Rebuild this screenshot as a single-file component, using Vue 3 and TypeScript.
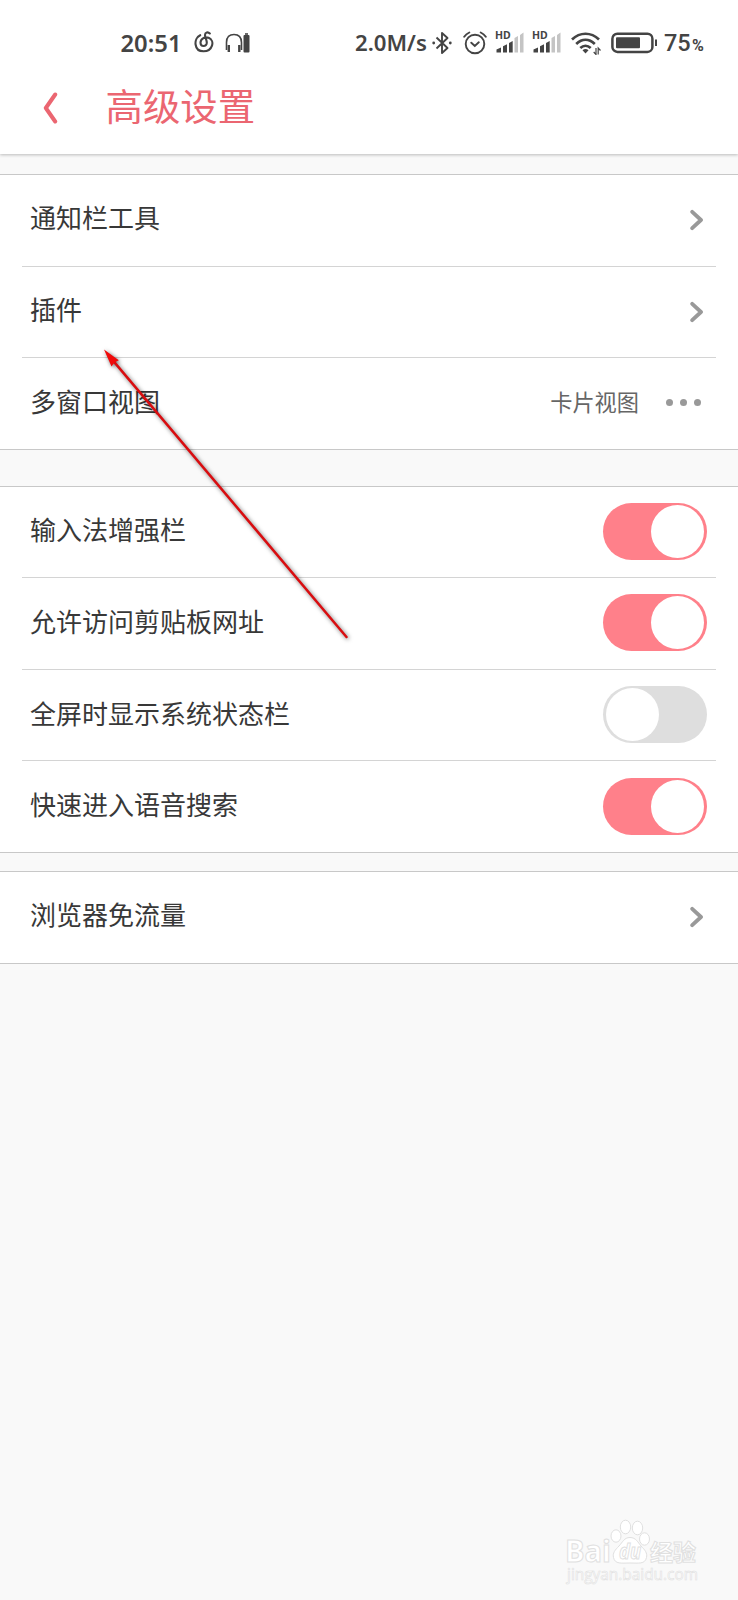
<script setup lang="ts">
type RowKind = 'link' | 'value' | 'toggle'

interface Row {
  label: string
  kind: RowKind
  value?: string
  on?: boolean
}

interface Group {
  id: string
  rows: Row[]
}

const groups: Group[] = [
  {
    id: 'tools',
    rows: [
      { label: '通知栏工具', kind: 'link' },
      { label: '插件', kind: 'link' },
      { label: '多窗口视图', kind: 'value', value: '卡片视图' },
    ],
  },
  {
    id: 'switches',
    rows: [
      { label: '输入法增强栏', kind: 'toggle', on: true },
      { label: '允许访问剪贴板网址', kind: 'toggle', on: true },
      { label: '全屏时显示系统状态栏', kind: 'toggle', on: false },
      { label: '快速进入语音搜索', kind: 'toggle', on: true },
    ],
  },
  {
    id: 'traffic',
    rows: [{ label: '浏览器免流量', kind: 'link' }],
  },
]
</script>

<template>
  <div class="screen">
    <header class="header">
      <div class="status">
        <span class="time">20:51</span>
        <svg class="music" width="20" height="22" viewBox="0 0 20 22" fill="none" stroke="#444" stroke-width="2.100" stroke-linecap="round">
          <path d="M6.200 4.200C-.8 7.500-.2 20.300 9.500 20.300C18.500 20.300 21.500 9.500 14.500 6.800C10.500 5.300 6.500 8 6.500 11.700C6.500 16 12.800 16 12.800 11.700C12.800 9 11 6.500 11 4C11 1 14 .6 15.800 2.500" />
        </svg>
        <svg class="phones" width="26" height="22" viewBox="0 0 26 22" fill="none" stroke="#444" stroke-width="1.600">
          <path d="M1.500 18V10.500C1.500 5 4.500 2.500 9 2.500s7.500 2.500 7.500 8V18" />
          <path d="M3.800 13v7M14.300 13v7" stroke-width="2.400" />
          <rect x="18.500" y="3" width="6" height="17.500" rx="1" fill="#444" stroke="none" />
          <path d="M20 2h3" />
        </svg>
        <span class="speed">2.0M/s</span>
        <svg class="bluetooth" width="20" height="24" viewBox="0 0 20 24" fill="none" stroke="#444" stroke-width="1.900" stroke-linejoin="round">
          <path d="M4.500 6.500L15.500 17L10 22V2l5.500 5L4.500 17.500" />
          <circle cx="1.700" cy="12" r="1.400" fill="#444" stroke="none" />
          <circle cx="18.300" cy="12" r="1.400" fill="#444" stroke="none" />
        </svg>
        <svg class="alarm" width="24" height="24" viewBox="0 0 24 24" fill="none" stroke="#444" stroke-width="1.900" stroke-linecap="round">
          <circle cx="12" cy="13" r="9.300" />
          <path d="M8.300 11.700l3.500 3.200 4-3.600M1.200 5.800C2.500 3.800 4.300 2.400 6.300 1.500M22.800 5.800C21.500 3.800 19.700 2.400 17.700 1.500" />
        </svg>
        <svg v-for="n in 2" :key="n" class="signal" width="29" height="32" viewBox="0 -4 29 32">
          <text x="0" y="7.800" class="hd">HD</text>
          <path d="M1.500 21.500v-3l4.500-2v5z" fill="#444" />
          <path d="M8 21.500v-6.300l4-2v8.300z" fill="#444" />
          <path d="M14 21.500v-9.500l3.700-2v11.500z" fill="#444" />
          <path d="M19.500 21.500V7l3.500-2v16.500zM25 21.500V4l3.500-2.500v20z" fill="#c4c4c4" />
        </svg>
        <svg class="wifi" width="30" height="24" viewBox="0 0 30 24" fill="none" stroke="#444" stroke-width="2.700">
          <path d="M1 8.500C9 .8 20 .8 28 8.500M5.200 13C11 7.500 18 7.500 23.800 13M9.300 17C12.500 14 16.500 14 19.700 17" />
          <path d="M14.500 22.500l-3-3.200q3-2.500 6 0z" fill="#444" stroke="none" />
          <path d="M25 17v6.500l-2.300-2.500M27.200 23.500v-6.500l2.300 2.500" stroke-width="1.200" />
        </svg>
        <svg class="battery" width="47" height="22" viewBox="0 0 47 22">
          <rect x="1.400" y="1.700" width="40" height="18.200" rx="5" fill="none" stroke="#444" stroke-width="2.500" />
          <rect x="5" y="5.300" width="24" height="11" rx="1" fill="#444" />
          <path d="M45 7.500v6.500" stroke="#444" stroke-width="2" />
        </svg>
        <span class="charge">75</span><span class="percent">%</span>
      </div>
      <div class="titlebar">
        <svg class="back" width="16" height="32" viewBox="0 0 16 32" fill="none" stroke="#eb6671" stroke-width="4" stroke-linecap="round" stroke-linejoin="round">
          <path d="M12.200 2.500L2.800 16l9.400 13.500" />
        </svg>
        <h1 class="title">高级设置</h1>
      </div>
    </header>

    <main>
      <section v-for="g in groups" :key="g.id" class="group" :class="g.id">
        <div v-for="row in g.rows" :key="row.label" class="row">
          <span class="label">{{ row.label }}</span>
          <svg v-if="row.kind === 'link'" class="chevron" width="14" height="22" viewBox="0 0 14 22" fill="none" stroke="#999" stroke-width="3.800" stroke-linecap="round">
            <path d="M2.200 2.800L11 11 2.200 19.200" stroke-linejoin="round" />
          </svg>
          <template v-else-if="row.kind === 'value'">
            <span class="value">{{ row.value }}</span>
            <span class="dots"><i /><i /><i /></span>
          </template>
          <span v-else class="toggle" :class="{ on: row.on }"><span class="knob" /></span>
        </div>
      </section>
    </main>

    <svg class="arrow" width="260" height="310" viewBox="0 0 260 310">
      <g class="arrow-shape">
        <path d="M13 10.600L246.500 287" stroke="#d90d10" stroke-width="2.500" stroke-linecap="round" />
        <path d="M4 -.5L18.800 10.300 14.500 12.500 11.500 16.500z" fill="#f00a0a" />
      </g>
    </svg>

    <svg class="watermark" width="150" height="76" viewBox="0 0 150 76">
      <g class="mark">
        <text x="5" y="46" class="bai" textLength="46" lengthAdjust="spacingAndGlyphs">Bai</text>
        <ellipse cx="56" cy="20" rx="5" ry="6.200" />
        <ellipse cx="65.500" cy="11" rx="5.200" ry="6.800" />
        <ellipse cx="77.500" cy="12" rx="5.200" ry="6.800" />
        <ellipse cx="84.500" cy="23" rx="5" ry="6.200" />
        <path d="M70 21.500c6 0 8 5 11 8.500 4 4 6.500 7 5.500 11.500-1.500 7-8 5.500-16.500 5.500s-15 1.500-16.500-5.500c-1-4.500 1.500-7.500 5.500-11.500 3.500-3.500 5-8.500 11-8.500z" />
        <text x="59" y="42.500" class="du" textLength="22" lengthAdjust="spacingAndGlyphs">du</text>
        <text x="90" y="44.500" class="cn" textLength="46">经验</text>
        <text x="7" y="63.500" class="url" textLength="131" lengthAdjust="spacingAndGlyphs">jingyan.baidu.com</text>
      </g>
    </svg>
  </div>
</template>

<style>
body {
  margin: 0;
  background: #f9f9f9;
}
</style>

<style scoped>
.screen {
  position: relative;
  width: 738px;
  height: 1600px;
  overflow: hidden;
  background: #f9f9f9;
  color: #383838;
  font-family: "Noto Sans", "Noto Sans CJK SC", sans-serif;
}
.header {
  height: 154px;
  background: #fff;
  box-shadow: 0 1px 3px rgba(0, 0, 0, 0.25);
}
.status {
  display: flex;
  align-items: center;
  height: 62px;
  padding: 23px 0 0 120.5px;
  box-sizing: border-box;
  color: #444;
  font-weight: 600;
  line-height: 36px;
  white-space: nowrap;
}
.status > * {
  flex: none;
}
.time {
  width: 61px;
  font-size: 23.8px;
}
.music {
  margin-left: 12px;
  margin-top: -1px;
}
.phones {
  margin-left: 11px;
}
.speed {
  width: 71px;
  margin-left: 104.5px;
  font-size: 22.2px;
}
.bluetooth {
  margin-left: 6px;
}
.alarm {
  margin-left: 11px;
}
.signal {
  margin-left: 8px;
}
.hd {
  font: 700 10.5px "Noto Sans", sans-serif;
  fill: #444;
}
.wifi {
  margin-left: 10px;
}
.battery {
  margin-left: 10px;
}
.charge {
  width: 28px;
  margin-left: 6px;
  margin-top: 1px;
  font-family: Roboto, sans-serif;
  font-weight: 500;
  font-size: 23.5px;
}
.percent {
  margin-top: 6px;
  font-family: Roboto, sans-serif;
  font-weight: 700;
  font-size: 16px;
}
.titlebar {
  display: flex;
  align-items: center;
  height: 92px;
}
.back {
  flex: none;
  margin-left: 42.5px;
}
.title {
  margin: -6px 0 0 47px;
  color: #eb6671;
  font-family: "Noto Sans CJK SC", sans-serif;
  font-weight: 400;
  font-size: 37.4px;
  line-height: 50px;
}
.group {
  box-sizing: border-box;
  background: #fff;
  border-top: 1px solid #c8c8c8;
  border-bottom: 1px solid #c8c8c8;
}
.tools {
  height: 276px;
  margin-top: 20px;
}
.switches {
  height: 367px;
  margin-top: 36px;
}
.traffic {
  height: 93px;
  margin-top: 18px;
}
.row {
  position: relative;
  display: flex;
  align-items: center;
  box-sizing: border-box;
  height: 91.67px;
  padding: 0 31px 1px 30px;
}
.switches .row {
  padding-bottom: 3px;
}
.row + .row::before {
  content: "";
  position: absolute;
  top: -1px;
  left: 22px;
  right: 22px;
  height: 1px;
  background: #d4d4d4;
}
.switches .row + .row::before {
  top: -1.5px;
}
.label {
  flex: 1;
  font-family: "Noto Sans CJK SC", sans-serif;
  font-size: 26px;
  line-height: 38px;
  margin-top: -6px;
}
.switches .label {
  margin-top: -4px;
}
.chevron {
  margin-right: 3px;
}
.value {
  margin-top: -6px;
  margin-right: 0.5px;
  color: #666;
  font-family: "Noto Sans CJK SC", sans-serif;
  font-size: 22.2px;
}
.dots {
  display: flex;
  gap: 7px;
  margin: -2px 6px 0 26.5px;
}
.dots i {
  width: 7px;
  height: 7px;
  border-radius: 50%;
  background: #999;
}
.toggle {
  display: flex;
  align-items: center;
  box-sizing: border-box;
  width: 104px;
  height: 57px;
  padding: 0 3px;
  border-radius: 29px;
  background: #dedede;
}
.toggle.on {
  justify-content: flex-end;
  background: #ff808a;
}
.knob {
  width: 53px;
  height: 53px;
  border-radius: 50%;
  background: #fff;
}
.arrow {
  position: absolute;
  left: 100px;
  top: 350px;
  overflow: visible;
}
.arrow-shape {
  filter: drop-shadow(1.5px 1.5px 2px rgba(0, 0, 0, 0.6));
}
.watermark {
  position: absolute;
  left: 560px;
  top: 1516px;
}
.mark {
  fill: #fff;
  stroke: #e0e0e0;
  stroke-width: 1px;
}
.bai {
  font: 700 31px "Open Sans", sans-serif;
}
.du {
  font: italic 700 21px "Open Sans", sans-serif;
}
.cn {
  font: 700 23px "Noto Sans CJK SC", sans-serif;
}
.url {
  font: 400 16.5px "Open Sans", sans-serif;
  stroke-width: 0.6px;
}
</style>
